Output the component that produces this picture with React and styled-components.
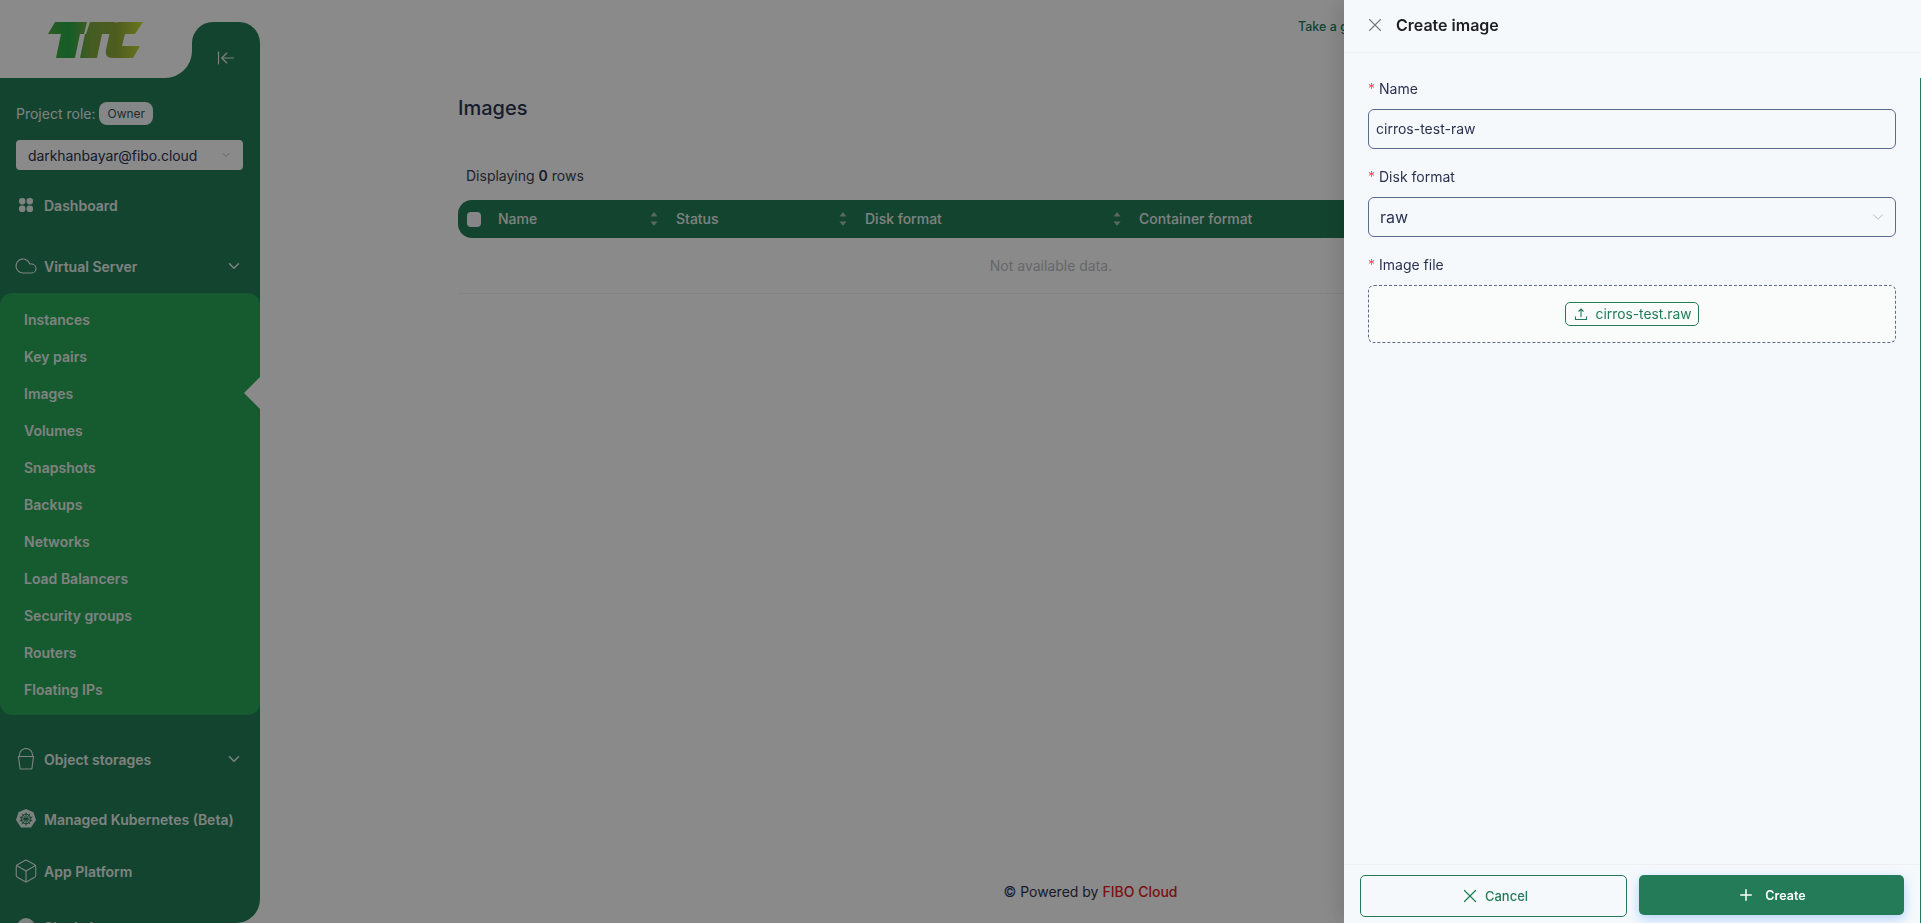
import styled, { createGlobalStyle } from 'styled-components';
import { ArrowLeftToLine, Box, ChevronDown, Cloud, Plus, X } from 'lucide-react';

const GREEN = '#237c57';
const SUB_GREEN = '#28a457';
const PAGE = '#fbfcfd';
const INK = '#2b3250';

const subMenu = ['Instances', 'Key pairs', 'Images', 'Volumes', 'Snapshots', 'Backups', 'Networks', 'Load Balancers', 'Security groups', 'Routers', 'Floating IPs'];

const columns = [
	{ label: 'Name', width: 178 },
	{ label: 'Status', width: 189 },
	{ label: 'Disk format', width: 274 },
	{ label: 'Container format', width: 300 },
];

function Logo() {
	return (
		<svg width="98" height="38" viewBox="0 0 98 38">
			<defs>
				<linearGradient id="ttc" x1="0" y1="0" x2="1" y2="0">
					<stop offset="0" stopColor="#4fa83f" />
					<stop offset="0.22" stopColor="#25a848" />
					<stop offset="0.45" stopColor="#7fa83f" />
					<stop offset="0.72" stopColor="#8fa93a" />
					<stop offset="1" stopColor="#c4d834" />
				</linearGradient>
			</defs>
			<path
				fill="url(#ttc)"
				d="M8 1H40L37 13H33L28 37H9L14 13H1ZM43 1H68L64 13H55L50 37H33L38 13H39ZM72 1H96L88 13H78L75 25H93L86 37H66C60 37 58 34 59 29L63 10C64 4 67 1 72 1Z"
			/>
		</svg>
	);
}

function DashboardIcon() {
	return (
		<svg width="16" height="16" viewBox="0 0 16 16" fill="currentColor">
			<rect x="1" y="1" width="6.4" height="6.4" rx="2.8" />
			<rect x="8.6" y="1" width="6.4" height="6.4" rx="2.8" />
			<rect x="1" y="8.6" width="6.4" height="6.4" rx="2.8" />
			<rect x="8.6" y="8.6" width="6.4" height="6.4" rx="2.8" />
		</svg>
	);
}

function BucketIcon() {
	return (
		<svg width="20" height="22" viewBox="0 0 20 22" fill="none" stroke="currentColor" strokeWidth="1.1">
			<path d="M2.500 8.500H17.500L16 20a1 1 0 0 1-1 1H5a1 1 0 0 1-1-1Z" />
			<path d="M3.500 8.500V7a6.500 6.500 0 0 1 13 0v1.500" />
		</svg>
	);
}

function KubeIcon() {
	return (
		<svg width="20" height="20" viewBox="0 0 20 20">
			<path fill="currentColor" d="M10 0L17.500 3.300L20 11L15 18.500H5L0 11L2.500 3.300Z" />
			<g fill="none" stroke="#237c57" strokeWidth="1">
				<circle cx="10" cy="10" r="4.800" />
				<path d="M10 3.500V16.500M3.700 8L16.300 12M16.300 8L3.700 12M6 4.800L14 15.200M14 4.800L6 15.200" />
			</g>
		</svg>
	);
}

function GlobeIcon() {
	return (
		<svg width="20" height="20" viewBox="0 0 20 20" fill="currentColor">
			<circle cx="10" cy="10" r="9" />
		</svg>
	);
}

function UploadIcon() {
	return (
		<svg width="14" height="14" viewBox="0 0 14 14" fill="none" stroke="currentColor" strokeWidth="1.1">
			<path d="M1.500 9.500V12.500H12.500V9.500" />
			<path d="M7 10V2M4.500 4.500L7 2L9.500 4.500" />
		</svg>
	);
}

function SortIcon() {
	return (
		<SortMark viewBox="0 0 8 16" width="8" height="16">
			<path d="M4 1L7.500 5.500H.5Z" />
			<path d="M4 15L.5 10.500H7.500Z" />
		</SortMark>
	);
}

export default function App() {
	return (
		<>
			<GlobalStyle />
			<Layout>
				<Sidebar>
					<TopRow>
						<Brand>
							<Logo />
						</Brand>
						<Collapse>
							<ArrowLeftToLine size={20} strokeWidth={1.4} />
						</Collapse>
					</TopRow>

					<RoleRow>
						Project role:
						<RoleBadge>Owner</RoleBadge>
					</RoleRow>
					<ProjectSelect>
						darkhanbayar@fibo.cloud
						<ChevronDown size={12} strokeWidth={1.5} color="#9aa0a6" />
					</ProjectSelect>

					<NavItem $top={12}>
						<NavIcon>
							<DashboardIcon />
						</NavIcon>
						Dashboard
					</NavItem>
					<NavItem $top={15}>
						<NavIcon>
							<Cloud size={24} strokeWidth={1.1} />
						</NavIcon>
						Virtual Server
						<NavCaret>
							<ChevronDown size={18} strokeWidth={2} />
						</NavCaret>
					</NavItem>
					<SubMenu>
						{subMenu.map(item => (
							<SubItem key={item} $active={item === 'Images'}>
								{item}
							</SubItem>
						))}
					</SubMenu>
					<NavItem $top={21}>
						<NavIcon>
							<BucketIcon />
						</NavIcon>
						Object storages
						<NavCaret>
							<ChevronDown size={18} strokeWidth={2} />
						</NavCaret>
					</NavItem>
					<NavItem $top={14}>
						<NavIcon>
							<KubeIcon />
						</NavIcon>
						Managed Kubernetes (Beta)
					</NavItem>
					<NavItem $top={6}>
						<NavIcon>
							<Box size={26} strokeWidth={1} />
						</NavIcon>
						App Platform
					</NavItem>
					<NavItem $top={10}>
						<NavIcon>
							<GlobeIcon />
						</NavIcon>
						Single host
					</NavItem>
				</Sidebar>

				<Main>
					<TourRow>Take a guided tour</TourRow>
					<Title>Images</Title>
					<RowCount>
						Displaying <b>0</b> rows
					</RowCount>
					<TableHead>
						<CheckCell>
							<CheckBox />
						</CheckCell>
						{columns.map(col => (
							<HeadCell key={col.label} $width={col.width}>
								{col.label}
								<SortIcon />
							</HeadCell>
						))}
					</TableHead>
					<EmptyRow>Not available data.</EmptyRow>
					<PoweredBy>
						© Powered by <FiboLink>FIBO Cloud</FiboLink>
					</PoweredBy>
				</Main>
			</Layout>

			<Overlay />

			<Drawer>
				<DrawerHeader>
					<X size={22} strokeWidth={1.2} color="#77797c" />
					<DrawerTitle>Create image</DrawerTitle>
				</DrawerHeader>
				<DrawerBody>
					<Label>Name</Label>
					<TextField>cirros-test-raw</TextField>
					<Label>Disk format</Label>
					<SelectField>
						raw
						<ChevronDown size={18} strokeWidth={1} color="#a3a8b0" />
					</SelectField>
					<Label>Image file</Label>
					<DropZone>
						<FileChip>
							<UploadIcon />
							cirros-test.raw
						</FileChip>
					</DropZone>
				</DrawerBody>
				<DrawerFooter>
					<CancelButton>
						<X size={22} strokeWidth={1.3} />
						Cancel
					</CancelButton>
					<CreateButton>
						<Plus size={18} strokeWidth={2} />
						Create
					</CreateButton>
				</DrawerFooter>
			</Drawer>
		</>
	);
}

const GlobalStyle = createGlobalStyle`
	html, body {
		margin: 0;
		height: 100%;
		overflow: hidden;
		background: ${PAGE};
		font-family: Inter, "Liberation Sans", sans-serif;
		color: ${INK};
	}
`;

const Layout = styled.div`
	display: flex;
	height: 100vh;
`;

const Sidebar = styled.aside`
	flex: 0 0 260px;
	height: 100vh;
	overflow: hidden;
	position: relative;
	background: linear-gradient(${PAGE} 78px, ${GREEN} 78px);
	border-radius: 0 0 24px 0;
	color: #e6eeea;
	font-size: 14px;
`;

const TopRow = styled.div`
	display: flex;
	height: 78px;
`;

const Brand = styled.div`
	position: relative;
	z-index: 1;
	flex: 0 0 192px;
	height: 78px;
	box-sizing: border-box;
	padding: 21px 0 0 47px;
	background: ${PAGE};
	border-radius: 0 0 27px 0;
`;

const Collapse = styled.div`
	position: relative;
	flex: 1;
	margin-top: 22px;
	padding: 26px 0 0 24px;
	box-sizing: border-box;
	background: ${GREEN};
	border-radius: 21px 21px 0 0;

	&::before {
		content: '';
		position: absolute;
		left: -27px;
		bottom: 0;
		width: 28px;
		height: 28px;
		background: ${GREEN};
	}
`;

const RoleRow = styled.div`
	display: flex;
	align-items: center;
	gap: 4px;
	height: 23px;
	margin: 24px 0 0 16px;
`;

const RoleBadge = styled.span`
	display: inline-flex;
	align-items: center;
	height: 23px;
	padding: 0 8px;
	border-radius: 8px;
	background: #f3f5f6;
	font-size: 12px;
	color: #33544a;
`;

const ProjectSelect = styled.div`
	display: flex;
	align-items: center;
	justify-content: space-between;
	box-sizing: border-box;
	width: 227px;
	height: 30px;
	margin: 15px 0 0 16px;
	padding: 0 11px 0 12px;
	border-radius: 4px;
	background: #fcfcfe;
	color: ${INK};
	font-size: 14px;
	letter-spacing: -0.08px;
`;

const NavItem = styled.div`
	display: flex;
	align-items: center;
	height: 46px;
	margin-top: ${p => p.$top}px;
	padding-left: 16px;
	font-weight: 600;
`;

const NavIcon = styled.span`
	display: inline-flex;
	align-items: center;
	justify-content: center;
	flex: 0 0 20px;
	width: 20px;
	margin-right: 8px;

	& svg {
		flex-shrink: 0;
	}
`;

const NavCaret = styled.span`
	display: inline-flex;
	margin-left: auto;
	margin-right: 17px;
`;

const SubMenu = styled.div`
	position: relative;
	margin-top: 4px;
	padding: 8px 0 7px;
	background: ${SUB_GREEN};
	border-radius: 12px;
`;

const SubItem = styled.div`
	position: relative;
	height: 37px;
	line-height: 37px;
	padding-left: 24px;
	font-weight: 600;

	${p =>
		p.$active &&
		`&::after {
			content: '';
			position: absolute;
			right: 0;
			top: 2px;
			border-style: solid;
			border-width: 16px 16px 16px 0;
			border-color: transparent ${PAGE} transparent transparent;
		}`}
`;

const Main = styled.main`
	flex: 1;
	min-width: 0;
	display: flex;
	flex-direction: column;
	padding-left: 198px;
	height: 100vh;
	box-sizing: border-box;
	position: relative;
`;

const TourRow = styled.div`
	height: 54px;
	line-height: 54px;
	padding-left: 840px;
	font-size: 12.5px;
	font-weight: 500;
	color: ${GREEN};
	white-space: nowrap;
`;

const Title = styled.h1`
	margin: 41px 0 0;
	font-size: 20px;
	line-height: 26px;
	font-weight: 500;
	color: ${INK};
`;

const RowCount = styled.div`
	margin: 46px 0 0 8px;
	font-size: 14px;
	line-height: 18px;
	color: #3b4152;

	& b {
		font-weight: 600;
		color: ${INK};
	}
`;

const TableHead = styled.div`
	display: flex;
	align-items: center;
	height: 38px;
	margin-top: 15px;
	width: 1186px;
	background: ${GREEN};
	border-radius: 14px 0 0 14px;
	color: #e6eeea;
	font-size: 14px;
	font-weight: 500;
`;

const CheckCell = styled.div`
	flex: 0 0 31px;
	padding-left: 9px;
	box-sizing: border-box;
`;

const CheckBox = styled.div`
	width: 14px;
	height: 15px;
	border-radius: 4px;
	background: #f4f5f7;
`;

const HeadCell = styled.div`
	position: relative;
	display: flex;
	align-items: center;
	justify-content: space-between;
	box-sizing: border-box;
	flex: 0 0 ${p => p.$width}px;
	padding: 0 9px 1px;
	white-space: nowrap;

	&::after {
		content: '';
		position: absolute;
		right: 0;
		top: 9px;
		bottom: 9px;
		width: 1px;
		background: rgba(255, 255, 255, 0.15);
	}
`;

const SortMark = styled.svg`
	fill: #a5bdb2;
`;

const EmptyRow = styled.div`
	width: 1186px;
	height: 55px;
	line-height: 56px;
	text-align: center;
	font-size: 14px;
	color: #b9bcc2;
	border-bottom: 1px solid #eceef0;
`;

const PoweredBy = styled.div`
	margin-top: auto;
	margin-left: -198px;
	height: 40px;
	text-align: center;
	font-size: 14px;
	line-height: 18px;
	color: ${INK};
`;

const FiboLink = styled.span`
	font-weight: 500;
	color: #e02020;
`;

const Overlay = styled.div`
	position: fixed;
	inset: 0;
	z-index: 10;
	background: rgba(0, 0, 0, 0.45);
`;

const Drawer = styled.section`
	position: fixed;
	z-index: 11;
	top: 0;
	right: 0;
	bottom: 0;
	width: 577px;
	display: flex;
	flex-direction: column;
	background: #f5f9fc;
	box-shadow: -6px 0 16px rgba(0, 0, 0, 0.08), -9px 0 28px rgba(0, 0, 0, 0.05);

	&::after {
		content: '';
		position: absolute;
		right: 0;
		top: 78px;
		bottom: 0;
		width: 1px;
		background: ${GREEN};
	}
`;

const DrawerHeader = styled.header`
	display: flex;
	align-items: center;
	gap: 10px;
	box-sizing: border-box;
	height: 53px;
	padding: 0 24px 2px 20px;
	border-bottom: 1px solid #eef0f2;
`;

const DrawerTitle = styled.h2`
	margin: 0;
	font-size: 16px;
	font-weight: 600;
	color: #1c1e22;
`;

const DrawerBody = styled.div`
	flex: 1;
	padding: 26px 25px 0 24px;
`;

const Label = styled.label`
	display: block;
	height: 20px;
	line-height: 20px;
	margin-bottom: 10px;
	font-size: 14px;
	color: ${INK};

	&::before {
		content: '*';
		margin-right: 4px;
		color: #ff4d4f;
	}
`;

const TextField = styled.div`
	box-sizing: border-box;
	height: 40px;
	line-height: 38px;
	margin-bottom: 18px;
	padding: 0 7px;
	border: 1px solid #5c6b8c;
	border-radius: 6px;
	font-size: 14px;
	color: ${INK};
`;

const SelectField = styled(TextField)`
	display: flex;
	align-items: center;
	justify-content: space-between;
	padding: 0 8px 0 11px;
	font-size: 16px;
`;

const DropZone = styled.div`
	display: flex;
	align-items: center;
	justify-content: center;
	box-sizing: border-box;
	height: 58px;
	border: 1px dashed #5c6b8c;
	border-radius: 6px;
	background: #fafbfb;
`;

const FileChip = styled.div`
	display: flex;
	align-items: center;
	gap: 8px;
	box-sizing: border-box;
	height: 24px;
	padding: 0 7px 0 8px;
	border: 1px solid ${GREEN};
	border-radius: 5px;
	font-size: 13.8px;
	color: ${GREEN};
`;

const DrawerFooter = styled.footer`
	display: flex;
	gap: 12px;
	box-sizing: border-box;
	height: 59px;
	padding: 10px 17px 0 16px;
	border-top: 1px solid #eef0f2;
`;

const CancelButton = styled.button`
	flex: 1;
	display: flex;
	align-items: center;
	justify-content: center;
	gap: 4px;
	height: 42px;
	padding: 0;
	border: 1px solid ${GREEN};
	border-radius: 5px;
	background: transparent;
	font: 500 13px Inter, "Liberation Sans", sans-serif;
	color: ${GREEN};
`;

const CreateButton = styled.button`
	flex: 1;
	display: flex;
	align-items: center;
	justify-content: center;
	gap: 10px;
	height: 40px;
	padding: 0;
	border: 0;
	border-radius: 5px;
	background: ${GREEN};
	box-shadow: 0 4px 12px rgba(60, 140, 255, 0.35);
	font: 600 12.5px Inter, "Liberation Sans", sans-serif;
	color: #fff;
`;
